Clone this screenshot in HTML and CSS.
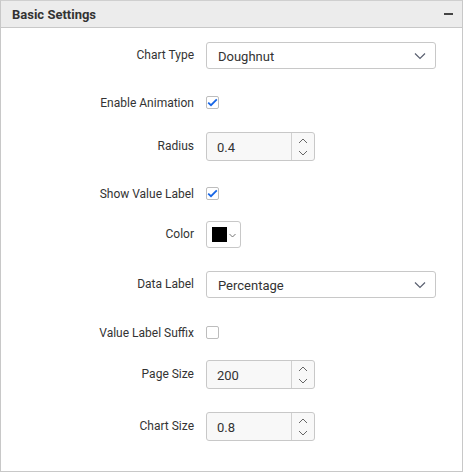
FILE: index.html
```html
<!DOCTYPE html>
<html>
<head>
<meta charset="utf-8">
<link rel="stylesheet" href="styles.css">
</head>
<body>
<div class="panel">
  <div class="header">
    <span class="title">Basic Settings</span>
    <span class="minus"></span>
  </div>
  <div class="body">
    <div class="row r-chart">
      <div class="label">Chart Type</div>
      <div class="select"><span>Doughnut</span>
        <svg class="chev" width="12" height="8" viewBox="0 0 12 8"><path d="M1 1.5 L6 6.5 L11 1.5" fill="none" stroke="#5a6070" stroke-width="1.2"/></svg>
      </div>
    </div>
    <div class="row r-anim check-row">
      <div class="label">Enable Animation</div>
      <div class="check on"><svg width="11" height="9" viewBox="0 0 11 9"><path d="M1.2 4.6 L4 7.2 L9.8 1.4" fill="none" stroke="#1766e6" stroke-width="1.8"/></svg></div>
    </div>
    <div class="row r-radius">
      <div class="label">Radius</div>
      <div class="numeric"><span class="val">0.4</span>
        <div class="spin">
          <svg width="10" height="6" viewBox="0 0 10 6"><path d="M1 5 L5 1 L9 5" fill="none" stroke="#666" stroke-width="1"/></svg>
          <svg width="10" height="6" viewBox="0 0 10 6"><path d="M1 1 L5 5 L9 1" fill="none" stroke="#666" stroke-width="1"/></svg>
        </div>
      </div>
    </div>
    <div class="row r-show check-row">
      <div class="label">Show Value Label</div>
      <div class="check on"><svg width="11" height="9" viewBox="0 0 11 9"><path d="M1.2 4.6 L4 7.2 L9.8 1.4" fill="none" stroke="#1766e6" stroke-width="1.8"/></svg></div>
    </div>
    <div class="row r-color">
      <div class="label">Color</div>
      <div class="color"><span class="swatch"></span>
        <svg width="7" height="5" viewBox="0 0 7 5"><path d="M0.5 1 L3.5 4 L6.5 1" fill="none" stroke="#666" stroke-width="0.9"/></svg>
      </div>
    </div>
    <div class="row r-data">
      <div class="label">Data Label</div>
      <div class="select"><span>Percentage</span>
        <svg class="chev" width="12" height="8" viewBox="0 0 12 8"><path d="M1 1.5 L6 6.5 L11 1.5" fill="none" stroke="#5a6070" stroke-width="1.2"/></svg>
      </div>
    </div>
    <div class="row r-suffix check-row">
      <div class="label">Value Label Suffix</div>
      <div class="check"></div>
    </div>
    <div class="row r-page">
      <div class="label">Page Size</div>
      <div class="numeric"><span class="val">200</span>
        <div class="spin">
          <svg width="10" height="6" viewBox="0 0 10 6"><path d="M1 5 L5 1 L9 5" fill="none" stroke="#666" stroke-width="1"/></svg>
          <svg width="10" height="6" viewBox="0 0 10 6"><path d="M1 1 L5 5 L9 1" fill="none" stroke="#666" stroke-width="1"/></svg>
        </div>
      </div>
    </div>
    <div class="row r-size">
      <div class="label">Chart Size</div>
      <div class="numeric"><span class="val">0.8</span>
        <div class="spin">
          <svg width="10" height="6" viewBox="0 0 10 6"><path d="M1 5 L5 1 L9 5" fill="none" stroke="#666" stroke-width="1"/></svg>
          <svg width="10" height="6" viewBox="0 0 10 6"><path d="M1 1 L5 5 L9 1" fill="none" stroke="#666" stroke-width="1"/></svg>
        </div>
      </div>
    </div>
  </div>
</div>
</body>
</html>
```
FILE: styles.css
```css
html, body { margin: 0; padding: 0; background: #fff; }
body { font-family: Roboto, "Liberation Sans", Arial, sans-serif; color: #333; }
.panel {
  width: 463px; height: 472px; box-sizing: border-box;
  border: 1px solid #c8c8c8; border-top-color: #cfcfcf;
}
.header {
  height: 26px; background: #ececec; border-bottom: 1px solid #c8c8c8;
  display: flex; align-items: center; justify-content: space-between;
  padding: 0 9px 0 11px;
}
.title { font-size: 13px; font-weight: 700; color: #333; }
.minus { width: 9px; height: 2px; background: #444; }
.body { display: flex; flex-direction: column; }
.row { display: flex; align-items: center; min-height: 27px; }
.label {
  width: 193px; text-align: right; padding-right: 12px; box-sizing: content-box;
  font-size: 12px; color: #333; margin-top: -2px;
}
.check-row .label { margin-top: 1px; }
.r-chart { margin-top: 14px; }
.r-anim { margin-top: 20px; }
.r-radius { margin-top: 16px; }
.r-show { margin-top: 19px; }
.r-color { margin-top: 14px; }
.r-data { margin-top: 23px; }
.r-suffix { margin-top: 21px; }
.r-page { margin-top: 14px; }
.r-size { margin-top: 23px; }
.select {
  width: 230px; height: 27px; box-sizing: border-box;
  border: 1px solid #c8c8c8; border-radius: 3px; background: #fff;
  display: flex; align-items: center; justify-content: space-between;
  padding: 0 9px 0 11px; font-size: 13px; color: #333;
}
.select span { padding-top: 1px; }
.check {
  width: 13px; height: 13px; box-sizing: border-box;
  border: 1px solid #bdbdbd; border-radius: 2px; background: #fff;
  display: flex; align-items: center; justify-content: center;
}
.numeric {
  width: 109px; height: 29px; box-sizing: border-box;
  border: 1px solid #c8c8c8; border-radius: 3px; background: #f8f8f8;
  display: flex; align-items: stretch; font-size: 13px; color: #333;
}
.numeric .val { flex: 1; display: flex; align-items: center; padding: 2px 0 0 10px; }
.spin {
  width: 22px; border-left: 1px solid #d0d0d0;
  display: flex; flex-direction: column; align-items: center; justify-content: center; gap: 6px;
}
.spin svg { display: block; }
.color {
  width: 35px; height: 27px; box-sizing: border-box;
  border: 1px solid #c8c8c8; border-radius: 3px; background: #fff;
  display: flex; align-items: center; padding-left: 5px; gap: 2px;
}
.swatch { width: 15px; height: 15px; background: #000; display: block; }
.color svg { display: block; margin-top: 2px; }
```
